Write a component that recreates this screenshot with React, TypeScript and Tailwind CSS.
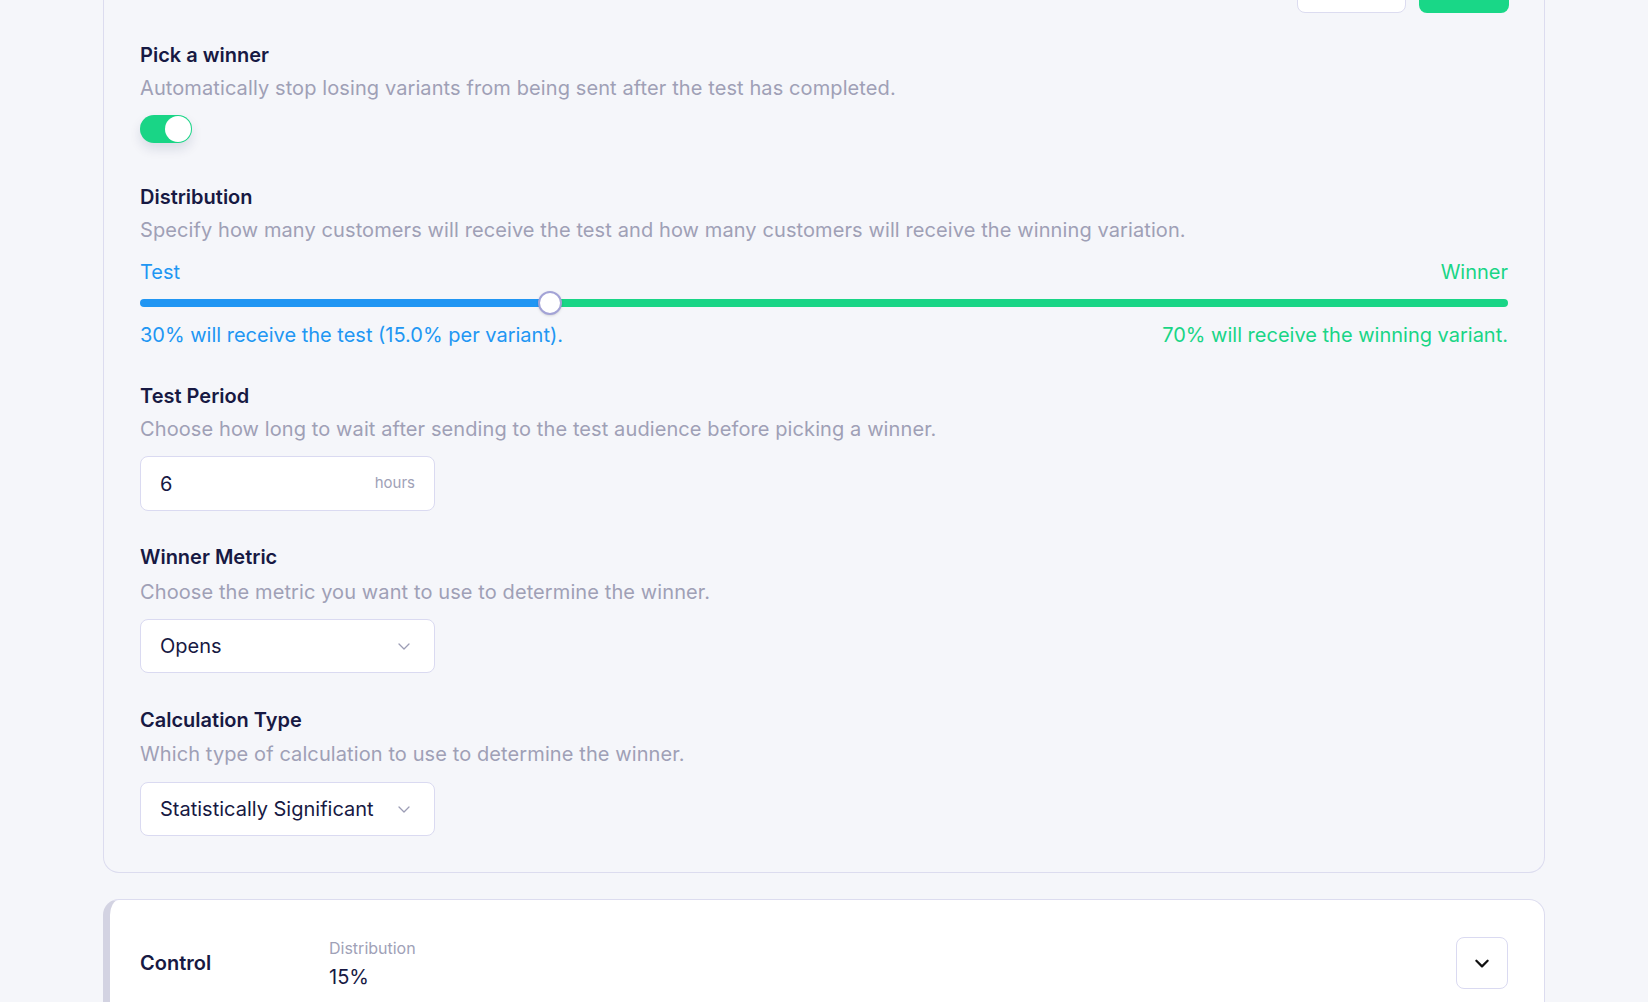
import { useState } from 'react';

const FONT = { fontFamily: 'Inter, "Noto Sans", sans-serif' };

function Chevron({ className }: { className?: string }) {
  return (
    <svg viewBox="0 0 16 16" className={className} fill="none" stroke="currentColor" strokeLinecap="round" strokeLinejoin="round">
      <path d="M3 6l5 5 5-5" />
    </svg>
  );
}

function Field({ title, desc, children, className = '', descGap = 'mt-[5px]' }: { title: string; desc: string; children?: React.ReactNode; className?: string; descGap?: string }) {
  return (
    <div className={className}>
      <h3 className="text-[20px] leading-[28px] font-semibold text-[#171943]">{title}</h3>
      <p className={`${descGap} text-[20px] leading-[28px] tracking-[0.1px] text-[#9fa0b6]`}>{desc}</p>
      {children}
    </div>
  );
}

export default function App() {
  const [pick, setPick] = useState(true);
  const testPct = 30;

  return (
    <div className="min-h-screen bg-[#f5f6fa] overflow-hidden" style={FONT}>
      <div className="w-[1442px] ml-[103px] -mt-[27px]">
        <div className="border border-[#dcdcef] rounded-b-2xl px-[36px] pb-[36px] border-t-0">
          <div className="flex justify-end gap-[13px] -mr-[1px]">
            <button className="w-[109px] h-10 rounded-lg bg-white border border-[#dcdcf0]" />
            <button className="w-[90px] h-10 rounded-lg bg-[#19d787]" />
          </div>

          <Field title="Pick a winner" desc="Automatically stop losing variants from being sent after the test has completed." className="mt-[28px]">
            <button
              onClick={() => setPick(!pick)}
              className={`mt-[13px] w-[52px] h-[28px] rounded-full p-[1px] flex items-center shadow-[0_6px_12px_rgba(20,30,80,0.12)] ${pick ? 'bg-[#19d586] justify-end' : 'bg-gray-300 justify-start'}`}
            >
              <span className="w-[26px] h-[26px] rounded-full bg-white block" />
            </button>
          </Field>

          <Field title="Distribution" desc="Specify how many customers will receive the test and how many customers will receive the winning variation." className="mt-[40px]">
            <div className="mt-[14px] flex justify-between text-[20px] leading-[28px]">
              <span className="text-[#2196f3]">Test</span>
              <span className="text-[#19d586]">Winner</span>
            </div>
            <div className="mt-[5px] relative h-[24px] flex items-center">
              <div className="flex w-full h-[8px] rounded-full overflow-hidden">
                <div className="bg-[#2196f3]" style={{ width: `${testPct}%` }} />
                <div className="bg-[#19d586] flex-1" />
              </div>
              <div
                className="absolute top-0 w-[24px] h-[24px] -ml-[12px] rounded-full bg-white border-2 border-[#a3a3d6] shadow"
                style={{ left: `${testPct}%` }}
              />
            </div>
            <div className="mt-[6px] flex justify-between text-[20px] leading-[28px]">
              <span className="text-[#2196f3]">30% will receive the test (15.0% per variant).</span>
              <span className="text-[#19d586]">70% will receive the winning variant.</span>
            </div>
          </Field>

          <Field title="Test Period" desc="Choose how long to wait after sending to the test audience before picking a winner." className="mt-[33px]">
            <div className="mt-[13px] w-[295px] h-[55px] rounded-lg bg-white border border-[#dadaf1] flex items-center justify-between px-[19px]">
              <span className="text-[20px] text-[#171943]">6</span>
              <span className="text-[15px] text-[#a0a1b7]">hours</span>
            </div>
          </Field>

          <Field title="Winner Metric" desc="Choose the metric you want to use to determine the winner." className="mt-[32px]" descGap="mt-[7px]">
            <div className="mt-[13px] w-[295px] h-[54px] rounded-lg bg-white border border-[#dadaf1] flex items-center justify-between pl-[19px] pr-[22px]">
              <span className="text-[20px] text-[#171943]">Opens</span>
              <Chevron className="w-[16px] h-[16px] text-[#9c9db5] stroke-[1.3]" />
            </div>
          </Field>

          <Field title="Calculation Type" desc="Which type of calculation to use to determine the winner." className="mt-[33px]" descGap="mt-[6px]">
            <div className="mt-[14px] w-[295px] h-[54px] rounded-lg bg-white border border-[#dadaf1] flex items-center justify-between pl-[19px] pr-[22px]">
              <span className="text-[20px] text-[#171943]">Statistically Significant</span>
              <Chevron className="w-[16px] h-[16px] text-[#9c9db5] stroke-[1.3]" />
            </div>
          </Field>
        </div>

        <div className="mt-[26px] bg-white border border-[#dcdcef] border-l-[7px] border-l-[#d3d3e2] rounded-2xl pl-[30px] pr-[36px] pt-[36px] pb-[37px] flex items-center">
          <div className="w-[189px] text-[20px] font-semibold text-[#171943]">Control</div>
          <div className="flex-1">
            <div className="text-[16px] leading-[24px] text-[#a0a1b7]">Distribution</div>
            <div className="mt-[4px] text-[20px] leading-[26px] text-[#171943]">15%</div>
          </div>
          <button className="w-[52px] h-[52px] rounded-lg border border-[#dadaf1] bg-white flex items-center justify-center">
            <Chevron className="w-[18px] h-[18px] text-[#111] stroke-[2]" />
          </button>
        </div>
      </div>
    </div>
  );
}
